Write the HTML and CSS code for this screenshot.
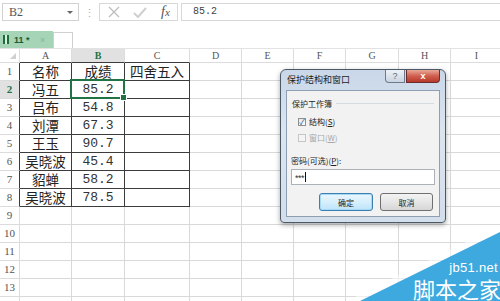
FILE: index.html
```html
<!DOCTYPE html>
<html lang="zh">
<head>
<meta charset="utf-8">
<title>保护结构和窗口</title>
<link rel="stylesheet" href="styles.css">
</head>
<body>
<div class="app">
  <div class="fbar">
    <div class="namebox"><span class="nb-text">B2</span><span class="dd"></span></div>
    <div class="grip">⋮</div>
    <div class="fxbox">
      <svg class="ic-x" width="12" height="12" viewBox="0 0 12 12"><path d="M1 1 L11 11 M11 1 L1 11" stroke="#bdbdbd" stroke-width="1.3" fill="none"/></svg>
      <svg class="ic-ok" width="14" height="11" viewBox="0 0 14 11"><path d="M1 6 L5 10 L13 1" stroke="#cfcfcf" stroke-width="2" fill="none"/></svg>
      <span class="fx">f<span class="fx-x">x</span></span>
    </div>
    <div class="finput">85.2</div>
  </div>

  <div class="tabrow">
    <div class="tab"><span class="ticon"></span><span class="tname">11 *</span><span class="tclose">×</span></div>
    <div class="tnew"></div>
  </div>

  <div class="sheet">
    <div class="c corner"><span class="tri"></span></div>
    <div class="c ch dk">A</div><div class="c ch dk hl">B</div><div class="c ch dk">C</div>
    <div class="c ch">D</div><div class="c ch">E</div><div class="c ch">F</div><div class="c ch">G</div><div class="c ch">H</div><div class="c ch">I</div>

    <div class="c rh dk">1</div><div class="c tc">名称</div><div class="c tc">成绩</div><div class="c tc">四舍五入</div>
    <div class="c"></div><div class="c"></div><div class="c"></div><div class="c"></div><div class="c"></div><div class="c"></div>

    <div class="c rh dk hl">2</div><div class="c tc">冯五</div><div class="c tc num sel">85.2</div><div class="c tc"></div>
    <div class="c"></div><div class="c"></div><div class="c"></div><div class="c"></div><div class="c"></div><div class="c"></div>

    <div class="c rh dk">3</div><div class="c tc">吕布</div><div class="c tc num">54.8</div><div class="c tc"></div>
    <div class="c"></div><div class="c"></div><div class="c"></div><div class="c"></div><div class="c"></div><div class="c"></div>

    <div class="c rh dk">4</div><div class="c tc">刘潭</div><div class="c tc num">67.3</div><div class="c tc"></div>
    <div class="c"></div><div class="c"></div><div class="c"></div><div class="c"></div><div class="c"></div><div class="c"></div>

    <div class="c rh dk">5</div><div class="c tc">王玉</div><div class="c tc num">90.7</div><div class="c tc"></div>
    <div class="c"></div><div class="c"></div><div class="c"></div><div class="c"></div><div class="c"></div><div class="c"></div>

    <div class="c rh dk">6</div><div class="c tc">吴晓波</div><div class="c tc num">45.4</div><div class="c tc"></div>
    <div class="c"></div><div class="c"></div><div class="c"></div><div class="c"></div><div class="c"></div><div class="c"></div>

    <div class="c rh dk">7</div><div class="c tc">貂蝉</div><div class="c tc num">58.2</div><div class="c tc"></div>
    <div class="c"></div><div class="c"></div><div class="c"></div><div class="c"></div><div class="c"></div><div class="c"></div>

    <div class="c rh dk">8</div><div class="c tc">吴晓波</div><div class="c tc num">78.5</div><div class="c tc"></div>
    <div class="c"></div><div class="c"></div><div class="c"></div><div class="c"></div><div class="c"></div><div class="c"></div>

    <div class="c rh">9</div><div class="c"></div><div class="c"></div><div class="c"></div>
    <div class="c"></div><div class="c"></div><div class="c"></div><div class="c"></div><div class="c"></div><div class="c"></div>

    <div class="c rh">10</div><div class="c"></div><div class="c"></div><div class="c"></div>
    <div class="c"></div><div class="c"></div><div class="c"></div><div class="c"></div><div class="c"></div><div class="c"></div>

    <div class="c rh">11</div><div class="c"></div><div class="c"></div><div class="c"></div>
    <div class="c"></div><div class="c"></div><div class="c"></div><div class="c"></div><div class="c"></div><div class="c"></div>

    <div class="c rh">12</div><div class="c"></div><div class="c"></div><div class="c"></div>
    <div class="c"></div><div class="c"></div><div class="c"></div><div class="c"></div><div class="c"></div><div class="c"></div>

    <div class="c rh">13</div><div class="c"></div><div class="c"></div><div class="c"></div>
    <div class="c"></div><div class="c"></div><div class="c"></div><div class="c"></div><div class="c"></div><div class="c"></div>

    <div class="c rh"></div><div class="c"></div><div class="c"></div><div class="c"></div>
    <div class="c"></div><div class="c"></div><div class="c"></div><div class="c"></div><div class="c"></div><div class="c"></div>
  </div>

  <div class="dialog">
    <div class="dlg-title">
      <span class="dlg-caption">保护结构和窗口</span>
      <div class="dlg-btns">
        <span class="tb-help">?</span>
        <span class="tb-close">x</span>
      </div>
    </div>
    <div class="dlg-body">
      <div class="grp"><span class="grp-label">保护工作簿</span><span class="grp-line"></span></div>
      <div class="chk"><span class="box on">✓</span><span>结构(<u>S</u>)</span></div>
      <div class="chk off"><span class="box"></span><span>窗口(<u>W</u>)</span></div>
      <div class="pw-label">密码(可选)(<u>P</u>):</div>
      <div class="pw-input"><span class="pw-dots">***</span><span class="caret"></span></div>
      <div class="dlg-actions">
        <span class="btn primary">确定</span>
        <span class="btn">取消</span>
      </div>
    </div>
  </div>

  <div class="wm">
    <svg class="wm-bg" width="145" height="72" viewBox="0 0 145 72">
      <polygon points="-8,72 145,-4 145,3 5,72" fill="#ffffff" opacity="0.55"/>
      <polygon points="5,72 145,3 145,72" fill="#3da9de"/>
    </svg>
    <span class="wm-url">jb51.net</span>
    <span class="wm-name">脚本之家</span>
  </div>
</div>
</body>
</html>
```

FILE: styles.css
```css
* { box-sizing: border-box; }
html, body { margin: 0; padding: 0; }
body {
  width: 500px;
  height: 301px;
  overflow: hidden;
  background: #ffffff;
  font-family: "Noto Sans CJK SC", "Liberation Sans", sans-serif;
}
.app {
  position: relative;
  width: 500px;
  height: 301px;
  overflow: hidden;
}

/* formula bar */
.fbar {
  display: flex;
  align-items: flex-start;
  height: 22px;
  padding-top: 3px;
}
.namebox {
  margin-left: 2px;
  width: 77px;
  height: 18px;
  border: 1px solid #d2d2d2;
  display: flex;
  align-items: center;
  justify-content: space-between;
  padding: 0 5px 0 6px;
}
.nb-text {
  font-family: "Liberation Serif", serif;
  font-size: 12px;
  color: #555;
}
.dd {
  width: 0; height: 0;
  border-left: 3px solid transparent;
  border-right: 3px solid transparent;
  border-top: 3px solid #666;
}
.grip {
  width: 20px;
  text-align: center;
  color: #b0b0b0;
  font-size: 11px;
  line-height: 18px;
}
.fxbox {
  width: 79px;
  height: 18px;
  border: 1px solid #d8d8d8;
  display: flex;
  align-items: center;
  padding-left: 8px;
}
.ic-x { margin-right: 13px; }
.ic-ok { margin-right: 14px; }
.fx {
  font-family: "Liberation Serif", serif;
  font-style: italic;
  font-size: 14px;
  color: #555;
  line-height: 1;
}
.fx-x { font-size: 11px; }
.finput {
  flex: 1;
  margin-left: 3px;
  height: 18px;
  border-top: 1px solid #d8d8d8;
  border-bottom: 1px solid #d8d8d8;
  border-left: 1px solid #d8d8d8;
  font-family: "Liberation Mono", monospace;
  font-size: 10px;
  color: #444;
  line-height: 16px;
  padding-left: 11px;
}

/* tab row */
.tabrow {
  display: flex;
  align-items: flex-end;
  height: 26px;
}
.tab {
  width: 53px;
  height: 17px;
  background: #a5d4b6;
  display: flex;
  align-items: center;
  padding-left: 3px;
}
.ticon {
  width: 6px;
  height: 9px;
  background: #1f6b3b;
  border-left: 2px solid #1f6b3b;
  box-shadow: inset 2px 0 0 #d8eede;
  margin-right: 5px;
}
.tname {
  font-family: "Liberation Sans", sans-serif;
  font-weight: bold;
  font-size: 9px;
  color: #1d5a33;
  width: 26px;
}
.tclose {
  font-size: 9px;
  color: #7fbb95;
  font-family: "Liberation Sans", sans-serif;
}
.tnew {
  width: 20px;
  height: 16px;
  border: 1px solid #d0d0d0;
  border-bottom: none;
  background: #fff;
}

/* sheet grid */
.sheet {
  display: grid;
  grid-template-columns: 20px 52px 53px 65px 52px 52px 52px 53px 52px 52px;
  grid-template-rows: 14px;
  grid-auto-rows: 18px;
  border-top: 1px solid #e2e2e2;
}
.c {
  border-right: 1px solid #d9d9d9;
  border-bottom: 1px solid #d9d9d9;
  display: flex;
  align-items: center;
  justify-content: center;
  white-space: nowrap;
  overflow: visible;
  font-size: 13px;
  color: #222;
  line-height: 1;
}
.tc { font-size: 13.5px; line-height: 15px; }
.ch, .rh, .corner {
  font-family: "Liberation Serif", serif;
  font-size: 10px;
  color: #555;
  background: #ffffff;
  border-color: #dcdcdc;
}
.rh { font-size: 11px; }
.corner { position: relative; }
.tri {
  position: absolute;
  right: 3px;
  bottom: 3px;
  width: 0; height: 0;
  border-left: 6px solid transparent;
  border-bottom: 6px solid #d0d0d0;
}
.ch.hl, .rh.hl {
  background: #e1e1e1;
  color: #217346;
  font-weight: bold;
}
.ch.dk { border-bottom-color: #3c3c3c; }
.rh.dk { border-right-color: #3c3c3c; }
.tc { border-color: #3c3c3c; }
.num {
  font-family: "Liberation Mono", monospace;
  font-size: 13px;
  color: #333;
}
.sel { position: relative; }
.sel::after {
  content: "";
  position: absolute;
  left: -2px; top: -2px; right: -1px; bottom: -1px;
  border: 2px solid #217346;
}
.sel::before {
  content: "";
  position: absolute;
  right: -3px; bottom: -3px;
  width: 5px; height: 5px;
  background: #217346;
  border: 1px solid #fff;
  z-index: 2;
}

/* dialog */
.dialog {
  position: absolute;
  left: 280px;
  top: 69px;
  width: 166px;
  height: 154px;
  border: 1px solid #4b5866;
  border-radius: 6px 6px 4px 4px;
  background: linear-gradient(#c9d7e8, #dbe5f0 40%, #d3deeb);
  box-shadow: 0 2px 5px rgba(0,0,0,0.35);
  display: flex;
  flex-direction: column;
  padding: 0 5px 5px 5px;
  font-size: 8px;
  color: #222;
}
.dlg-title {
  height: 20px;
  display: flex;
  justify-content: space-between;
  align-items: flex-start;
}
.dlg-caption {
  font-size: 9px;
  line-height: 20px;
  color: #1e1e1e;
  padding-left: 1px;
}
.dlg-btns {
  display: flex;
  gap: 1px;
}
.tb-help, .tb-close {
  height: 13px;
  display: flex;
  align-items: center;
  justify-content: center;
  font-family: "Liberation Sans", sans-serif;
  line-height: 1;
}
.tb-help {
  width: 20px;
  border: 1px solid #6e7b8b;
  border-top: none;
  border-radius: 0 0 0 4px;
  background: linear-gradient(#eef2f7, #c9d5e2);
  color: #5a6a7a;
  font-size: 9px;
}
.tb-close {
  width: 34px;
  border: 1px solid #6a2e2e;
  border-top: none;
  border-radius: 0 0 4px 0;
  background: linear-gradient(#e9a89a, #cf5f4f 50%, #b8392a);
  color: #fff;
  font-weight: bold;
  font-size: 9px;
}
.dlg-body {
  flex: 1;
  background: #f2f2f2;
  border: 1px solid #8e9fb3;
  display: flex;
  flex-direction: column;
  padding: 0 5px 0 4px;
}
.grp {
  display: flex;
  align-items: center;
  margin-top: 7px;
  height: 10px;
  padding-left: 1px;
}
.grp-label { font-size: 8px; color: #222; }
.grp-line {
  flex: 1;
  height: 0;
  border-top: 1px solid #d5dbe2;
  margin-left: 4px;
}
.chk {
  display: flex;
  align-items: center;
  height: 9px;
  margin-top: 9px;
  padding-left: 7px;
  gap: 3px;
}
.chk + .chk { margin-top: 7px; }
.chk.off { color: #a8a8a8; }
.box {
  width: 8px;
  height: 8px;
  border: 1px solid #8f8f8f;
  background: linear-gradient(#e8e8e8, #ffffff);
  font-size: 8px;
  line-height: 6px;
  color: #2a4b8d;
  text-align: center;
}
.chk.off .box { border-color: #c6c6c6; background: #f4f4f4; }
.pw-label {
  margin-top: 14px;
  height: 10px;
  line-height: 10px;
}
.pw-input {
  margin-top: 3px;
  width: 144px;
  height: 16px;
  border: 1px solid #acb0b8;
  background: #fff;
  display: flex;
  align-items: center;
  padding-left: 3px;
}
.pw-dots {
  font-family: "Liberation Sans", sans-serif;
  font-size: 9px;
  line-height: 9px;
  padding-top: 2px;
  letter-spacing: -0.5px;
  color: #333;
}
.caret {
  width: 1px;
  height: 10px;
  background: #111;
  margin-left: 1px;
}
.dlg-actions {
  display: flex;
  justify-content: flex-end;
  gap: 7px;
  margin-top: 8px;
  padding-right: 1px;
}
.btn {
  width: 53px;
  height: 18px;
  border: 1px solid #707070;
  border-radius: 3px;
  background: linear-gradient(#f3f3f3, #e6e6e6 50%, #d6d6d6);
  display: flex;
  align-items: center;
  justify-content: center;
  font-size: 8px;
  color: #222;
}
.btn.primary {
  width: 54px;
  border-color: #3c7fb1;
  background: linear-gradient(#eaf6fd, #d7effc 50%, #bce4fa);
  box-shadow: inset 0 0 0 1px #a7d8f5;
}

/* watermark */
.wm {
  position: absolute;
  right: 0;
  bottom: 0;
  width: 145px;
  height: 72px;
  display: flex;
  flex-direction: column;
  align-items: flex-end;
  justify-content: flex-end;
  color: #ffffff;
  padding-bottom: 1px;
}
.wm-bg {
  position: absolute;
  left: 0;
  top: 0;
}
.wm-url {
  position: relative;
  font-family: "Liberation Sans", sans-serif;
  font-size: 13px;
  line-height: 13px;
  padding-right: 2px;
  margin-bottom: 3px;
  letter-spacing: 0.3px;
}
.wm-name {
  position: relative;
  font-size: 22px;
  line-height: 23px;
  height: 23px;
  margin-right: -1px;
}
```
